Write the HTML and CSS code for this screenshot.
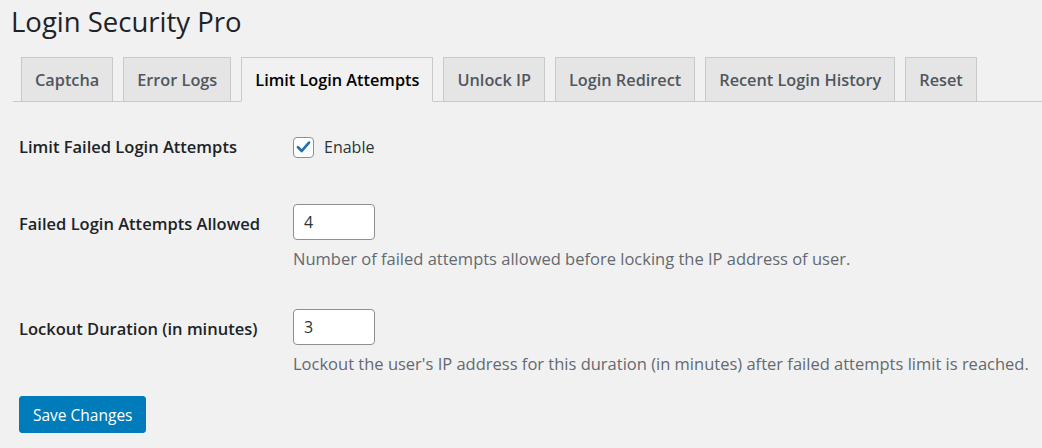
FILE: index.html
```html
<!DOCTYPE html>
<html lang="en">
<head>
<meta charset="utf-8">
<title>Login Security Pro</title>
<link rel="stylesheet" href="styles.css">
</head>
<body>
<div class="page">
  <h1 class="title">Login Security Pro</h1>
  <nav class="tabs">
    <a class="tab" href="#">Captcha</a>
    <a class="tab" href="#">Error Logs</a>
    <a class="tab tab-active" href="#">Limit Login Attempts</a>
    <a class="tab" href="#">Unlock IP</a>
    <a class="tab" href="#">Login Redirect</a>
    <a class="tab" href="#">Recent Login History</a>
    <a class="tab" href="#">Reset</a>
  </nav>
  <form class="form">
    <div class="row row-check">
      <div class="label">Limit Failed Login Attempts</div>
      <label class="check-field">
        <span class="checkbox"><svg viewBox="0 0 20 20" width="20" height="20"><path d="M4.2 10.2 L8.2 14.2 L15.8 5.4" fill="none" stroke="#2271b1" stroke-width="2.8" stroke-linecap="round" stroke-linejoin="round"/></svg></span>
        <span class="check-text">Enable</span>
      </label>
    </div>
    <div class="row row-input row-attempts">
      <div class="label label-input">Failed Login Attempts Allowed</div>
      <div class="field">
        <input class="text-input" type="text" value="4">
        <p class="desc">Number of failed attempts allowed before locking the IP address of user.</p>
      </div>
    </div>
    <div class="row row-input row-duration">
      <div class="label label-input">Lockout Duration (in minutes)</div>
      <div class="field">
        <input class="text-input" type="text" value="3">
        <p class="desc">Lockout the user's IP address for this duration (in minutes) after failed attempts limit is reached.</p>
      </div>
    </div>
    <button class="button-primary" type="button">Save Changes</button>
  </form>
</div>
</body>
</html>
```
FILE: styles.css
```css
html, body {
  margin: 0;
  padding: 0;
}
body {
  background: #f1f1f1;
  font-family: "Open Sans", "Noto Sans", sans-serif;
  color: #1d2327;
}
.page {
  padding-left: 13px;
}
.title {
  margin: 0 0 0 -2px;
  padding-top: 4px;
  font-size: 27.5px;
  line-height: 36px;
  font-weight: 400;
  color: #1d2327;
}
.tabs {
  display: flex;
  gap: 10px;
  margin-top: 17px;
  padding-left: 8px;
  border-bottom: 1px solid #c9c9c9;
  height: 44px;
}
.tab {
  display: block;
  box-sizing: border-box;
  height: 45px;
  padding: 10px 13px 8px;
  line-height: 25px;
  font-size: 16.3px;
  font-weight: 600;
  color: #50575e;
  background: #e5e5e5;
  border: 1px solid #c9c9c9;
  text-decoration: none;
  white-space: nowrap;
}
.tab-active {
  background: #f1f1f1;
  color: #000;
  border-bottom-color: #f1f1f1;
}
.form {
  padding-left: 6px;
}
.row {
  display: grid;
  grid-template-columns: 274px 1fr;
}
.row-check {
  margin-top: 34px;
  align-items: center;
}
.row-attempts {
  margin-top: 46px;
}
.row-duration {
  margin-top: 39px;
}
.label {
  font-size: 16.5px;
  font-weight: 600;
  line-height: 22px;
  color: #1d2327;
}
.label-input {
  padding-top: 8px;
  line-height: 24px;
}
.check-field {
  display: flex;
  align-items: center;
  gap: 10px;
}
.checkbox {
  box-sizing: border-box;
  width: 21px;
  height: 21px;
  border: 1px solid #8c8f94;
  border-radius: 4px;
  background: #fff;
  display: flex;
  align-items: center;
  justify-content: center;
}
.checkbox svg {
  display: block;
}
.check-text {
  font-size: 16px;
  line-height: 22px;
  color: #2c3338;
}
.field {
  display: flex;
  flex-direction: column;
  align-items: flex-start;
}
.text-input {
  box-sizing: border-box;
  width: 82px;
  height: 36px;
  margin: 0;
  padding: 0 10px;
  border: 1px solid #8c8f94;
  border-radius: 4px;
  background: #fff;
  font-family: "Open Sans", "Noto Sans", sans-serif;
  font-size: 16px;
  color: #2c3338;
}
.desc {
  margin: 8px 0 0;
  font-size: 16.5px;
  line-height: 22px;
  color: #646970;
  white-space: nowrap;
}
.button-primary {
  display: block;
  box-sizing: border-box;
  margin-top: 21px;
  height: 37px;
  padding: 0 13px;
  border: 1px solid #007cba;
  border-radius: 3px;
  background: #007cba;
  color: #fff;
  font-family: "Open Sans", "Noto Sans", sans-serif;
  font-size: 15.5px;
  line-height: 36px;
  cursor: pointer;
}
```
